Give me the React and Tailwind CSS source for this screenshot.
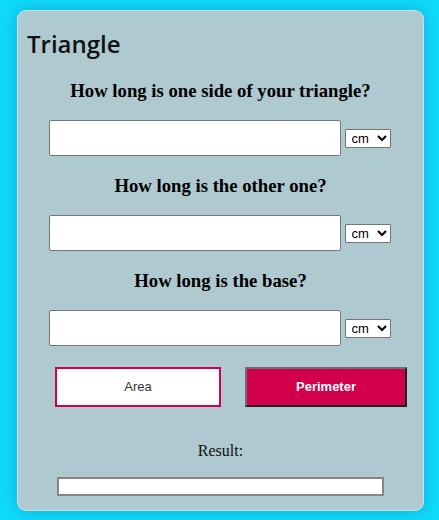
import React from "react";

function Row({ q }) {
  return (
    <div className="flex flex-col items-center">
      <div
        className="text-[18.72px] leading-[22px] font-bold text-black text-center"
        style={{ fontFamily: '"Liberation Serif", serif' }}
      >
        {q}
      </div>
      <div className="mt-[18px] mr-[2px] flex items-center gap-[4px]">
        <input
          type="text"
          className="h-[36px] w-[292px] border border-[#767676] bg-white rounded-[2px] px-1"
        />
        <select
          className="h-[19px] w-[46px] border border-[#767676] bg-white text-[13px] leading-none text-black rounded-[1px] pl-[2px]"
          style={{ fontFamily: '"Liberation Sans", Arial, sans-serif' }}
          defaultValue="cm"
        >
          <option value="cm">cm</option>
          <option value="m">m</option>
        </select>
      </div>
    </div>
  );
}

export default function App() {
  return (
    <div className="w-[439px] h-[520px] bg-[#10dbfa] pt-[10px] pl-[17px] overflow-hidden">
      <div className="w-[407px] h-[501px] bg-[#afc9d0] rounded-[9px] border border-white/40 shadow-[0_0_18px_rgba(0,90,150,0.35)] pt-[19px] flex flex-col">
        <div
          className="pl-[9px] text-[24px] leading-[28px] font-semibold text-[#111]"
          style={{ fontFamily: '"Open Sans", sans-serif' }}
        >
          Triangle
        </div>
        <div className="mt-[22px] flex flex-col gap-[19px]">
          <Row q="How long is one side of your triangle?" />
          <Row q="How long is the other one?" />
          <Row q="How long is the base?" />
        </div>
        <div
          className="mt-[21px] ml-[37px] flex gap-[24px]"
          style={{ fontFamily: '"Liberation Sans", Arial, sans-serif' }}
        >
          <button className="w-[166px] h-[40px] bg-white border-2 border-[#d2004b] text-[13px] text-[#333]">
            Area
          </button>
          <button className="w-[162px] h-[40px] bg-[#d2004b] border-2 border-t-[#6f6f6f] border-l-[#6f6f6f] border-r-[#222] border-b-[#222] text-[13px] font-bold text-white">
            Perimeter
          </button>
        </div>
        <div
          className="mt-[34px] text-[16px] leading-[20px] text-center text-[#111]"
          style={{ fontFamily: '"Liberation Serif", serif' }}
        >
          Result:
        </div>
        <div className="mt-[16px] ml-[39px] w-[327px] h-[19px] bg-white border-2 border-[#858585]" />
      </div>
    </div>
  );
}
